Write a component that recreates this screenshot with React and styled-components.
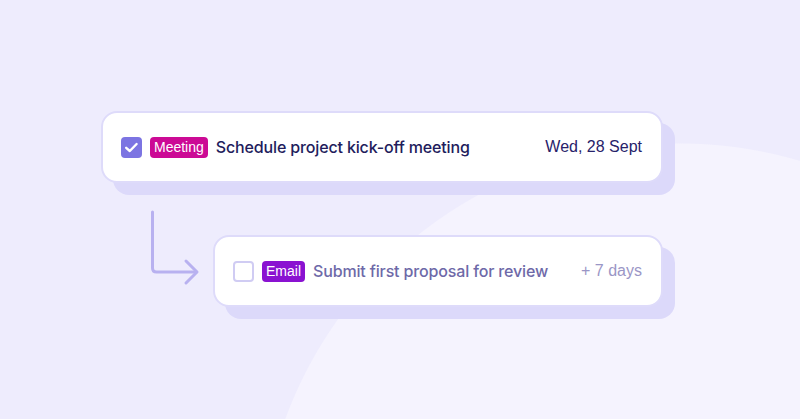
import React from "react";
import styled, { createGlobalStyle } from "styled-components";

const Global = createGlobalStyle`
  html, body { margin: 0; padding: 0; }
  body {
    width: 800px;
    height: 419px;
    overflow: hidden;
    font-family: "Liberation Sans", Arial, sans-serif;
  }
`;

const Page = styled.div`
  width: 800px;
  height: 419px;
  box-sizing: border-box;
  padding: 111px 0 0 101px;
  background: radial-gradient(circle 421px at 680px 564px, #f5f3fe 420px, #eeecfd 421px);
  display: flex;
  flex-direction: column;
`;

const Card = styled.div`
  box-sizing: border-box;
  width: ${(p) => p.$width}px;
  height: 72px;
  background: #ffffff;
  border: 2px solid #dedbfa;
  border-radius: 16px;
  box-shadow: 12px 12px 0 #dcd9fa;
  display: flex;
  align-items: center;
  padding: 0 19px 0 18px;
`;

const SubRow = styled.div`
  display: flex;
  align-items: flex-start;
  margin-top: 22px;
`;

const ArrowWrap = styled.svg`
  width: 112px;
  height: 90px;
  flex: none;
  display: block;
`;

const SubCard = styled(Card)`
  margin-top: 30px;
`;

const Check = styled.div`
  box-sizing: border-box;
  width: 21px;
  height: 21px;
  border-radius: 4px;
  flex: none;
  display: flex;
  align-items: center;
  justify-content: center;
  background: ${(p) => (p.$checked ? "#7c74e2" : "#ffffff")};
  border: ${(p) => (p.$checked ? "none" : "2px solid #d0ccf3")};
`;

const Badge = styled.span`
  margin-left: 8px;
  height: 21px;
  padding: 0 4px;
  border-radius: 4px;
  background: ${(p) => p.$color};
  color: #ffffff;
  font-size: 14px;
  line-height: 21px;
  flex: none;
`;

const Title = styled.span`
  margin-left: 8px;
  font-family: Inter, "Liberation Sans", sans-serif;
  font-weight: 500;
  font-size: 16px;
  letter-spacing: -0.15px;
  color: ${(p) => p.$color};
  white-space: nowrap;
`;

const Meta = styled.span`
  margin-left: auto;
  font-size: 16px;
  color: ${(p) => p.$color};
  white-space: nowrap;
`;

function CheckMark() {
  return (
    <svg width="15" height="15" viewBox="0 0 15 15" fill="none">
      <path d="M2.2 7.8 L5.8 11 L12.6 4" stroke="#fff" strokeWidth="2.4" strokeLinecap="round" strokeLinejoin="round" />
    </svg>
  );
}

export default function App() {
  return (
    <>
      <Global />
      <Page>
        <Card $width={562}>
          <Check $checked>
            <CheckMark />
          </Check>
          <Badge $color="#cc0a95">Meeting</Badge>
          <Title $color="#221c5c">Schedule project kick-off meeting</Title>
          <Meta $color="#27226a">Wed, 28 Sept</Meta>
        </Card>
        <SubRow>
          <ArrowWrap viewBox="0 0 112 90">
            <path
              d="M51.5 7 V63 Q51.5 67 55.5 67 H95"
              fill="none"
              stroke="#b8b1f0"
              strokeWidth="3"
              strokeLinecap="round"
            />
            <path
              d="M85 56 L96 67 L85 78"
              fill="none"
              stroke="#b8b1f0"
              strokeWidth="3"
              strokeLinecap="round"
              strokeLinejoin="round"
            />
          </ArrowWrap>
          <SubCard $width={450}>
            <Check />
            <Badge $color="#8a12d1">Email</Badge>
            <Title $color="#6e69a8">Submit first proposal for review</Title>
            <Meta $color="#9a96c6">+ 7 days</Meta>
          </SubCard>
        </SubRow>
      </Page>
    </>
  );
}
